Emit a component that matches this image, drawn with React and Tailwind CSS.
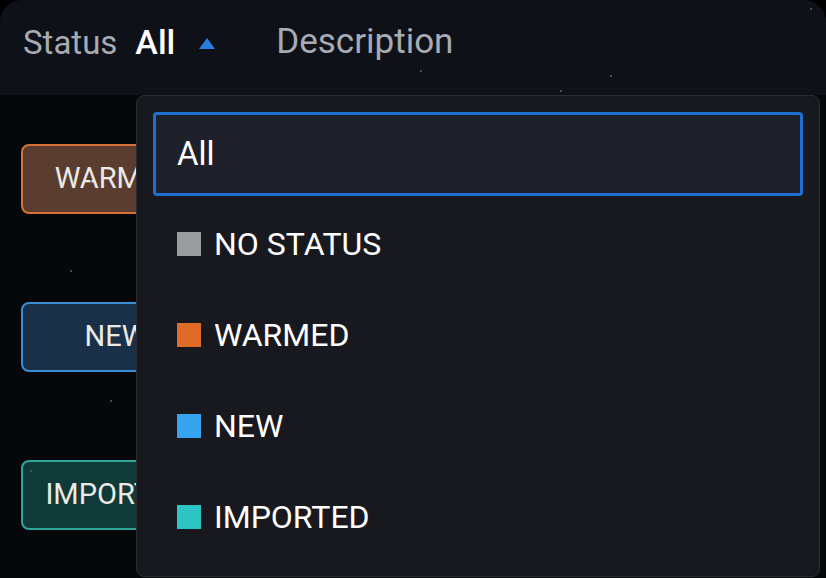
const statuses = [
  { label: 'NO STATUS', color: 'bg-[#9b9c9e]' },
  { label: 'WARMED', color: 'bg-[#e06b26]' },
  { label: 'NEW', color: 'bg-[#36a4ef]' },
  { label: 'IMPORTED', color: 'bg-[#2ec4c4]' },
];

const tags = [
  { label: 'WARMED', cls: 'bg-[#5a3d2f] border-[#d6713a]' },
  { label: 'NEW', cls: 'bg-[#1a3049] border-[#3a8fd4]' },
  { label: 'IMPORTED', cls: 'bg-[#0f3a37] border-[#2fa597]' },
];

const stars = [
  [268, 96], [70, 270], [90, 180], [420, 70], [610, 75], [810, 8], [560, 90], [30, 470], [110, 400],
];

export default function App() {
  return (
    <div
      className="relative h-[578px] w-[826px] overflow-hidden bg-black"
      style={{ fontFamily: 'Roboto, "Noto Sans", sans-serif' }}
    >
      <div className="flex h-full flex-col overflow-hidden rounded-t-[22px] bg-[#05070b]">
        <header className="flex h-[95px] shrink-0 items-center bg-[#0e1118] pl-[23px] pb-[10px]">
          <span className="text-[33px] text-[#a7abb3]">Status</span>
          <span className="ml-[18px] text-[34px] font-medium text-white">All</span>
          <span className="ml-[24px] mt-[2px] h-0 w-0 border-x-[8px] border-b-[11px] border-x-transparent border-b-[#2a7de0]" />
          <span className="ml-[61px] text-[35px] text-[#a7abb3]">Description</span>
        </header>

        <div className="flex flex-col gap-[88px] pl-[21px] pt-[49px]">
          {tags.map((t) => (
            <div
              key={t.label}
              className={`flex h-[70px] w-[190px] items-center justify-center rounded-[8px] border-2 text-[29px] text-[#eceae6] ${t.cls}`}
            >
              {t.label}
            </div>
          ))}
        </div>
      </div>

      {stars.map(([x, y], i) => (
        <span
          key={i}
          className="absolute h-[2px] w-[2px] rounded-full bg-[#5b6068]"
          style={{ left: x, top: y }}
        />
      ))}

      <div className="absolute left-[136px] top-[95px] flex h-[482px] w-[684px] flex-col rounded-[8px] border border-[#2a2c32] bg-[#18191e] px-[16px] pt-[16px]">
        <div className="flex h-[84px] shrink-0 items-center rounded-[4px] border-[3px] border-[#1f6fd2] bg-[#1e212a] pl-[21px] text-[33px] text-white">
          All
        </div>
        <div className="mt-[2px] flex flex-col">
          {statuses.map((s) => (
            <div key={s.label} className="flex h-[91px] items-center pl-[24px]">
              <span className={`h-[24px] w-[24px] ${s.color}`} />
              <span className="ml-[13px] text-[32px] text-white">{s.label}</span>
            </div>
          ))}
        </div>
      </div>
    </div>
  );
}
